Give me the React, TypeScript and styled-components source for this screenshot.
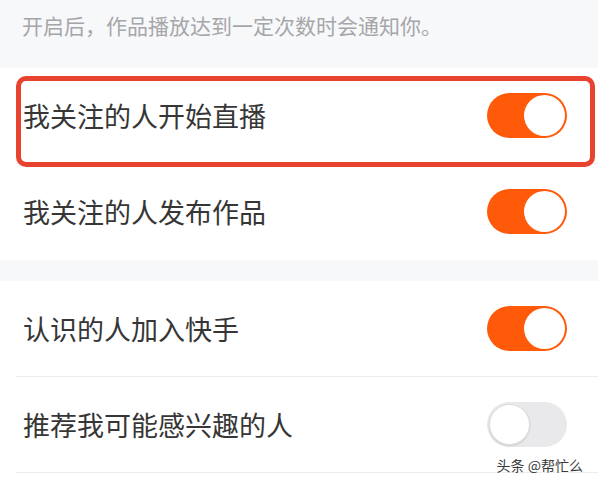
import React from "react";
import styled, { createGlobalStyle } from "styled-components";

const GlobalStyle = createGlobalStyle`
  html, body { margin: 0; padding: 0; background: #ffffff; }
  body { font-family: "Noto Sans CJK SC", "Noto Sans", sans-serif; }
`;

const Page = styled.div`
  position: relative;
  width: 598px;
  height: 486px;
  overflow: hidden;
  background: #ffffff;
`;

const Hint = styled.div`
  box-sizing: border-box;
  height: 68px;
  padding: 12px 0 0 22px;
  background: #f7f8fa;
  color: #a6a6a9;
  font-size: 21px;
  line-height: 26px;
`;

const Gap = styled.div`
  height: 21px;
  background: #f7f8fa;
`;

const Section = styled.div`
  padding-left: 16px;
  background: #ffffff;
`;

const Row = styled.div<{ $divider: boolean }>`
  position: relative;
  height: 95px;
  display: flex;
  align-items: center;
  justify-content: space-between;
  padding: 0 31px 0 7px;
  border-bottom: 1px solid ${(p) => (p.$divider ? "#ececee" : "transparent")};
`;

const Label = styled.span`
  font-size: 27px;
  line-height: 34px;
  color: #363636;
`;

const Track = styled.div<{ $on: boolean }>`
  box-sizing: border-box;
  width: 80px;
  height: 45px;
  border-radius: 23px;
  padding: 2px;
  display: flex;
  justify-content: ${(p) => (p.$on ? "flex-end" : "flex-start")};
  align-items: center;
  background: ${(p) => (p.$on ? "#fe5a0a" : "#e9e9eb")};
`;

const Knob = styled.div<{ $on: boolean }>`
  box-sizing: border-box;
  width: 41px;
  height: 41px;
  border-radius: 50%;
  background: #ffffff;
  border: ${(p) => (p.$on ? "none" : "1px solid #dcdcdc")};
  box-shadow: ${(p) => (p.$on ? "none" : "0 1px 2px rgba(0,0,0,0.12)")};
`;

const Highlight = styled.div`
  position: absolute;
  top: 8px;
  left: 0;
  right: 3px;
  bottom: -4px;
  border: 5px solid #e8432e;
  border-radius: 10px;
  z-index: 1;
  pointer-events: none;
`;

const Watermark = styled.div`
  position: absolute;
  right: 15px;
  bottom: 12px;
  font-size: 14px;
  line-height: 18px;
  color: #3a3a3a;
  text-shadow: 0 0 2px #fff, 0 0 2px #fff;
  z-index: 2;
`;

const Toggle = ({ on }: { on: boolean }) => (
  <Track $on={on}>
    <Knob $on={on} />
  </Track>
);

type Item = { label: string; on: boolean; highlight?: boolean; divider: boolean };

const group1: Item[] = [
  { label: "我关注的人开始直播", on: true, highlight: true, divider: true },
  { label: "我关注的人发布作品", on: true, divider: false },
];

const group2: Item[] = [
  { label: "认识的人加入快手", on: true, divider: true },
  { label: "推荐我可能感兴趣的人", on: false, divider: true },
];

const renderRows = (items: Item[]) =>
  items.map((it) => (
    <Row key={it.label} $divider={it.divider}>
      <Label>{it.label}</Label>
      <Toggle on={it.on} />
      {it.highlight && <Highlight />}
    </Row>
  ));

export default function App() {
  return (
    <Page>
      <GlobalStyle />
      <Hint>开启后，作品播放达到一定次数时会通知你。</Hint>
      <Section>{renderRows(group1)}</Section>
      <Gap />
      <Section>{renderRows(group2)}</Section>
      <Watermark>头条 @帮忙么</Watermark>
    </Page>
  );
}
